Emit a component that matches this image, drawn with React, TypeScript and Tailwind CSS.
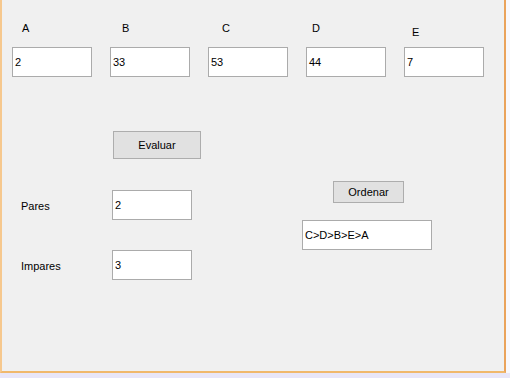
const font = { fontFamily: '"Liberation Sans", Arial, sans-serif' };

const fields = [
  { label: "A", value: "2", labelClass: "ml-[10px]" },
  { label: "B", value: "33", labelClass: "ml-[12px]" },
  { label: "C", value: "53", labelClass: "ml-[14px]" },
  { label: "D", value: "44", labelClass: "ml-[6px]" },
  { label: "E", value: "7", labelClass: "ml-[8px] mt-[4px]" },
];

function TextBox({ value, className }: { value: string; className: string }) {
  return (
    <div
      className={`flex h-[30px] items-center border border-[#ababab] bg-white px-[2px] text-[11px] leading-[13px] text-black ${className}`}
    >
      {value}
    </div>
  );
}

function WinButton({ label, className }: { label: string; className: string }) {
  return (
    <button
      type="button"
      className={`flex items-center justify-center border border-[#adadad] bg-[#e1e1e1] text-[11px] leading-[13px] text-black ${className}`}
    >
      {label}
    </button>
  );
}

export default function App() {
  return (
    <div className="flex h-[378px] w-[510px] flex-col bg-[#e8e6f8]" style={font}>
      <div className="flex h-[373px]">
        <div className="h-[373px] w-[506px] border-b-2 border-l-2 border-r-2 border-b-[#f0b86c] border-l-[#f6c88e] border-r-[#eaa35b] bg-[#f0f0f0]">
          {/* top row */}
          <div className="flex gap-[18px] pl-[10px] pt-[22px]">
            {fields.map((f) => (
              <div key={f.label} className="flex w-[80px] flex-col">
                <div className="h-[25px]">
                  <div className={`text-[11px] leading-[13px] text-black ${f.labelClass}`}>{f.label}</div>
                </div>
                <TextBox value={f.value} className="w-[80px]" />
              </div>
            ))}
          </div>

          <WinButton label="Evaluar" className="ml-[111px] mt-[54px] h-[28px] w-[88px]" />

          <div className="flex">
            <div className="mt-[31px] flex flex-col gap-[30px]">
              <div className="flex items-start">
                <span className="ml-[19px] mt-[10px] w-[91px] text-[11px] leading-[13px] text-black">Pares</span>
                <TextBox value="2" className="w-[80px]" />
              </div>
              <div className="flex items-start">
                <span className="ml-[19px] mt-[10px] w-[91px] text-[11px] leading-[13px] text-black">Impares</span>
                <TextBox value="3" className="w-[80px]" />
              </div>
            </div>
            <div className="ml-[110px] flex flex-col">
              <WinButton label="Ordenar" className="ml-[31px] mt-[22px] h-[22px] w-[71px]" />
              <TextBox value="C>D>B>E>A" className="mt-[17px] w-[130px]" />
            </div>
          </div>
        </div>
        <div className="flex-1 bg-[#f8f8fc]" />
      </div>
    </div>
  );
}
